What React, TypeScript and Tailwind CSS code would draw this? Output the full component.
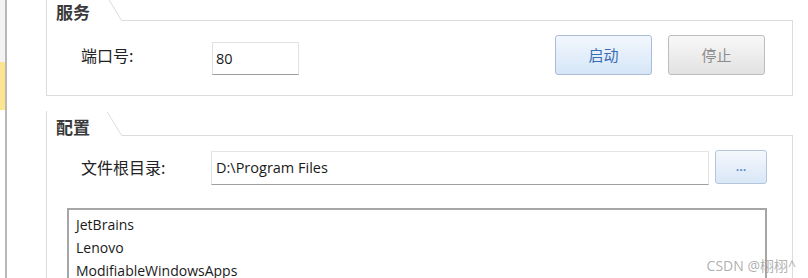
const cjk = "font-['Microsoft_YaHei','Noto_Sans_CJK_SC',sans-serif]";
const latin = "font-['Open_Sans','Noto_Sans_CJK_SC',sans-serif]";

function GroupTab({ title }: { title: string }) {
  return (
    <div className="flex h-[25px]">
      <div
        className={`w-[61px] border-l border-[#dcdcdc] pl-[9px] pt-[7px] text-[17px] leading-none font-bold text-[#3a3a3a] ${cjk}`}
      >
        {title}
      </div>
      <svg width="15" height="25" className="shrink-0">
        <path d="M0 0.5 L14.5 24.5 H15" stroke="#dcdcdc" strokeWidth="1" fill="none" />
      </svg>
      <div className="flex-1 border-b border-[#dcdcdc]" />
    </div>
  );
}

const files = ["JetBrains", "Lenovo", "ModifiableWindowsApps"];

export default function App() {
  return (
    <div className="relative flex h-[278px] w-[808px] overflow-hidden bg-white">
      {/* left edge of the host window */}
      <div className="flex w-[5px] flex-col">
        <div className="h-[62px] bg-[#f3f3f3]" />
        <div className="h-[48px] bg-[#fde48e]" />
      </div>
      <div className="w-[2px] bg-[#b8b8b8]" />

      <div className="ml-[39px] flex w-[747px] flex-col">
        {/* 服务 */}
        <div className="-mt-[4px] flex flex-col">
          <GroupTab title="服务" />
          <div className="flex h-[75px] border-x border-b border-[#dcdcdc] pl-[34px] pr-[27px] pt-[14px]">
            <div className={`flex h-[40px] w-[131px] items-center text-[16px] text-[#222] ${cjk}`}>端口号:</div>
            <div
              className={`mt-[7px] flex h-[33px] w-[87px] items-center border border-[#e2e2e2] border-b-[#9c9c9c] pl-[3px] text-[14.5px] text-[#1a1a1a] ${latin}`}
            >
              80
            </div>
            <div className="flex-1" />
            <button
              className={`h-[40px] w-[97px] rounded-[3px] border border-[#a9bdd6] bg-gradient-to-b from-[#f2f7fd] to-[#d6e6f7] text-[15px] text-[#3a6db5] ${cjk}`}
            >
              启动
            </button>
            <button
              className={`ml-[16px] h-[40px] w-[97px] rounded-[3px] border border-[#bdbdbd] bg-gradient-to-b from-[#f8f8f8] to-[#e2e2e2] text-[15px] text-[#8c8c8c] ${cjk}`}
            >
              停止
            </button>
          </div>
        </div>

        {/* 配置 */}
        <div className="mt-[15px] flex flex-col">
          <GroupTab title="配置" />
          <div className="flex h-[200px] flex-col border-x border-[#dcdcdc] pl-[34px] pr-[24px] pt-[14px]">
            <div className="flex h-[34px]">
              <div className={`flex h-[34px] w-[130px] items-center text-[16px] text-[#222] ${cjk}`}>文件根目录:</div>
              <div
                className={`mt-[1px] flex h-[34px] w-[498px] items-center border border-[#e4e4e4] border-b-[#a0a0a0] pl-[4px] text-[14.5px] text-[#1a1a1a] ${latin}`}
              >
                D:\Program Files
              </div>
              <button
                className={`ml-[6px] h-[34px] w-[52px] rounded-[3px] border border-[#b4c6dc] bg-gradient-to-b from-[#f4f8fd] to-[#d9e7f6] pb-[2px] text-[13px] leading-none font-semibold text-[#4f7fc8] ${latin}`}
              >
                ...
              </button>
            </div>
            <div className="ml-[-14px] mr-[1px] mt-[24px] h-[90px] border-2 border-[#a6a6a6] pl-[7px] pt-[3px]">
              {files.map((f) => (
                <div key={f} className={`h-[23px] text-[14px] leading-[23px] text-[#1a1a1a] ${latin}`}>
                  {f}
                </div>
              ))}
            </div>
          </div>
        </div>
      </div>

      {/* watermark */}
      <div
        className={`absolute bottom-[5px] right-[12px] text-[14px] leading-none text-[#9a9a9a]/80 ${latin}`}
      >
        CSDN @栩栩^
      </div>
    </div>
  );
}
